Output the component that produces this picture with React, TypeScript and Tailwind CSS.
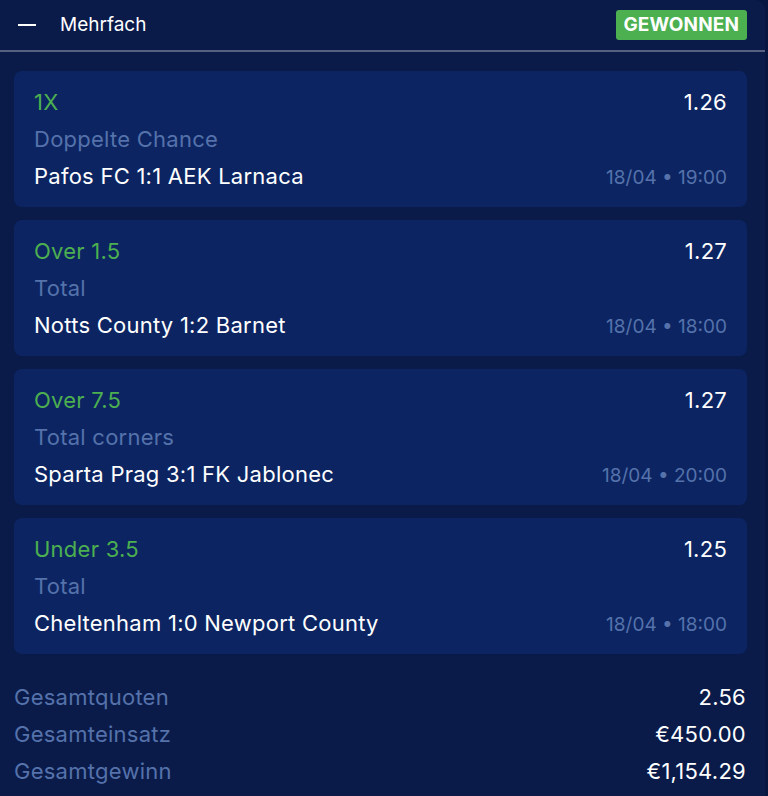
const bets = [
  { pick: "1X", market: "Doppelte Chance", match: "Pafos FC 1:1 AEK Larnaca", odds: "1.26", date: "18/04 • 19:00" },
  { pick: "Over 1.5", market: "Total", match: "Notts County 1:2 Barnet", odds: "1.27", date: "18/04 • 18:00" },
  { pick: "Over 7.5", market: "Total corners", match: "Sparta Prag 3:1 FK Jablonec", odds: "1.27", date: "18/04 • 20:00" },
  { pick: "Under 3.5", market: "Total", match: "Cheltenham 1:0 Newport County", odds: "1.25", date: "18/04 • 18:00" },
];

const totals = [
  { label: "Gesamtquoten", value: "2.56" },
  { label: "Gesamteinsatz", value: "€450.00" },
  { label: "Gesamtgewinn", value: "€1,154.29" },
];

const BetCard = ({ bet }: { bet: (typeof bets)[number] }) => {
  return (
    <div className="h-[136px] bg-[#0c2562] rounded-[8px] px-5 pt-[13px] leading-[37px] text-[22px] tracking-[0.25px]">
      <div className="flex justify-between">
        <p className="text-[#4caf50]">{bet.pick}</p>
        <p className="text-white">{bet.odds}</p>
      </div>
      <p className="text-[#5572ab]">{bet.market}</p>
      <div className="flex justify-between items-baseline">
        <p className="text-white">{bet.match}</p>
        <p className="text-[#5572ab] text-[19px] tracking-normal">{bet.date}</p>
      </div>
    </div>
  );
};

export default function App() {
  return (
    <div className="w-[768px] h-[796px] bg-[#071640] overflow-hidden" style={{ fontFamily: "Inter, 'Noto Sans', sans-serif" }}>
      <div className="w-[765px] h-full bg-[#0a1b4a] rounded-tr-[10px]">
        <div className="h-[52px] flex items-center justify-between pl-[18px] pr-[18px] border-b-2 border-[#566181]">
          <div className="flex items-center gap-[24px]">
            <span className="block w-[18px] h-[2px] bg-white"></span>
            <p className="text-white text-[19px]">Mehrfach</p>
          </div>
          <span className="bg-[#4caf50] text-white font-bold text-[19px] leading-[30px] px-2 rounded-[3px] tracking-[0.1px]">
            GEWONNEN
          </span>
        </div>
        <div className="flex flex-col gap-[13px] px-[14px] pt-[19px] pr-[18px]">
          {bets.map((bet, index) => (
            <BetCard key={`${bet.match}-${index}`} bet={bet} />
          ))}
        </div>
        <div className="px-[14px] pr-[19px] pt-[25px] text-[22px] leading-[37px] tracking-[0.25px]">
          {totals.map((row) => (
            <div key={row.label} className="flex justify-between">
              <p className="text-[#5572ab]">{row.label}</p>
              <p className="text-white">{row.value}</p>
            </div>
          ))}
        </div>
      </div>
    </div>
  );
}
